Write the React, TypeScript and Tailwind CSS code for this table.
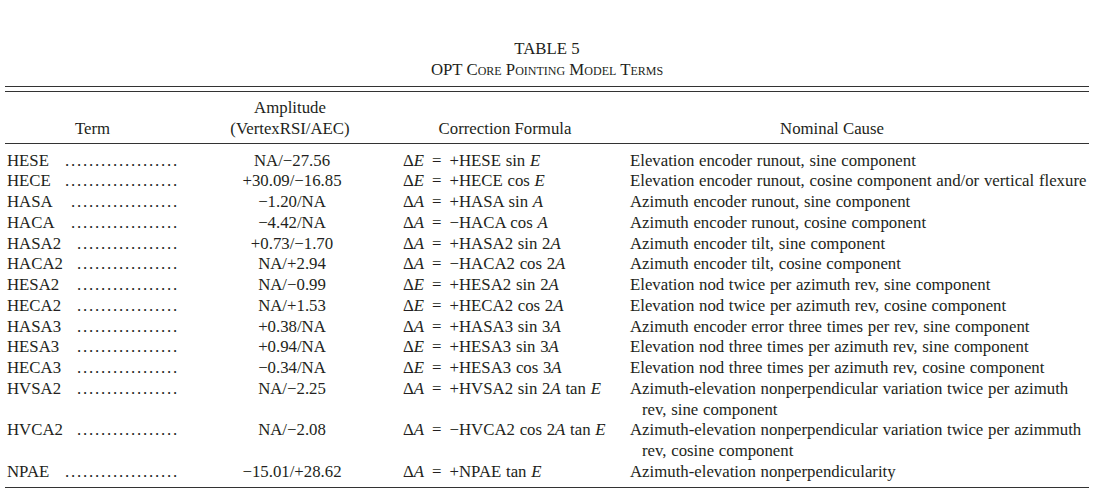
import React from "react";

type Row = {
  term: string;
  amp: string;
  formula: React.ReactNode;
  cause: string[];
};

const I = ({ children }: { children: React.ReactNode }) => <i>{children}</i>;
const Eq = () => <span className="inline-block mx-[8px]">=</span>;

const rows: Row[] = [
  { term: "HESE", amp: "NA/−27.56", formula: <>Δ<I>E</I><Eq />+HESE sin <I>E</I></>, cause: ["Elevation encoder runout, sine component"] },
  { term: "HECE", amp: "+30.09/−16.85", formula: <>Δ<I>E</I><Eq />+HECE cos <I>E</I></>, cause: ["Elevation encoder runout, cosine component and/or vertical flexure"] },
  { term: "HASA", amp: "−1.20/NA", formula: <>Δ<I>A</I><Eq />+HASA sin <I>A</I></>, cause: ["Azimuth encoder runout, sine component"] },
  { term: "HACA", amp: "−4.42/NA", formula: <>Δ<I>A</I><Eq />−HACA cos <I>A</I></>, cause: ["Azimuth encoder runout, cosine component"] },
  { term: "HASA2", amp: "+0.73/−1.70", formula: <>Δ<I>A</I><Eq />+HASA2 sin 2<I>A</I></>, cause: ["Azimuth encoder tilt, sine component"] },
  { term: "HACA2", amp: "NA/+2.94", formula: <>Δ<I>A</I><Eq />−HACA2 cos 2<I>A</I></>, cause: ["Azimuth encoder tilt, cosine component"] },
  { term: "HESA2", amp: "NA/−0.99", formula: <>Δ<I>E</I><Eq />+HESA2 sin 2<I>A</I></>, cause: ["Elevation nod twice per azimuth rev, sine component"] },
  { term: "HECA2", amp: "NA/+1.53", formula: <>Δ<I>E</I><Eq />+HECA2 cos 2<I>A</I></>, cause: ["Elevation nod twice per azimuth rev, cosine component"] },
  { term: "HASA3", amp: "+0.38/NA", formula: <>Δ<I>A</I><Eq />+HASA3 sin 3<I>A</I></>, cause: ["Azimuth encoder error three times per rev, sine component"] },
  { term: "HESA3", amp: "+0.94/NA", formula: <>Δ<I>E</I><Eq />+HESA3 sin 3<I>A</I></>, cause: ["Elevation nod three times per azimuth rev, sine component"] },
  { term: "HECA3", amp: "−0.34/NA", formula: <>Δ<I>E</I><Eq />+HESA3 cos 3<I>A</I></>, cause: ["Elevation nod three times per azimuth rev, cosine component"] },
  { term: "HVSA2", amp: "NA/−2.25", formula: <>Δ<I>A</I><Eq />+HVSA2 sin 2<I>A</I> tan <I>E</I></>, cause: ["Azimuth-elevation nonperpendicular variation twice per azimuth", "rev, sine component"] },
  { term: "HVCA2", amp: "NA/−2.08", formula: <>Δ<I>A</I><Eq />−HVCA2 cos 2<I>A</I> tan <I>E</I></>, cause: ["Azimuth-elevation nonperpendicular variation twice per azimmuth", "rev, cosine component"] },
  { term: "NPAE", amp: "−15.01/+28.62", formula: <>Δ<I>A</I><Eq />+NPAE tan <I>E</I></>, cause: ["Azimuth-elevation nonperpendicularity"] },
];

// rough Times glyph widths (em) to size the dot leaders
const W: Record<string, number> = { H: 0.722, E: 0.611, S: 0.556, C: 0.667, A: 0.722, V: 0.722, N: 0.722, P: 0.556, "2": 0.5, "3": 0.5 };

function leader(term: string) {
  const termW = term.split("").reduce((s, c) => s + (W[c] ?? 0.6), 0) * 16.8;
  const n = Math.floor((177 - 7 - termW - 11) / 6);
  return ".".repeat(Math.max(n, 0));
}

export default function App() {
  return (
    <div className="w-[1094px] h-[495px] bg-white text-[#231f20] font-['Liberation_Serif',serif] text-[16.8px] leading-[20.75px] overflow-hidden">
      <div className="pt-[38px] text-center">
        <div className="leading-[21px]">TABLE 5</div>
        <div className="leading-[21px] [font-variant:small-caps]">OPT Core Pointing Model Terms</div>
      </div>

      <div className="mx-[5px] mt-[6px]">
        <div className="border-t border-[#333]" />
        <div className="mt-[4px] border-t border-[#333]" />

        <div className="grid grid-cols-[185px_200px_240px_1fr] pt-[6px] pb-[3px]">
          <div className="self-end text-center pr-[10px]">Term</div>
          <div className="text-center">
            <div>Amplitude</div>
            <div>(VertexRSI/AEC)</div>
          </div>
          <div className="self-end text-center pr-[10px]">Correction Formula</div>
          <div className="self-end text-center pr-[55px]">Nominal Cause</div>
        </div>
        <div className="border-t border-[#333]" />

        <div className="pt-[7px] pb-[4px] [word-spacing:0.5px]">
          {rows.map((r) => (
            <div key={r.term} className="grid grid-cols-[185px_200px_240px_1fr]">
              <div className="flex pl-[2px] pr-[11px] whitespace-nowrap">
                <span>{r.term}</span>
                <span className="flex-1 flex justify-end">
                  <span className="tracking-[1.8px]">{leader(r.term)}</span>
                </span>
              </div>
              <div className="text-center pl-[4px] whitespace-nowrap">{r.amp}</div>
              <div className="pl-[13px] whitespace-nowrap">{r.formula}</div>
              <div className="whitespace-nowrap">
                {r.cause.map((c, i) => (
                  <div key={i} className={i > 0 ? "pl-[12px]" : ""}>
                    {c}
                  </div>
                ))}
              </div>
            </div>
          ))}
        </div>
        <div className="border-t border-[#333]" />
      </div>
    </div>
  );
}
